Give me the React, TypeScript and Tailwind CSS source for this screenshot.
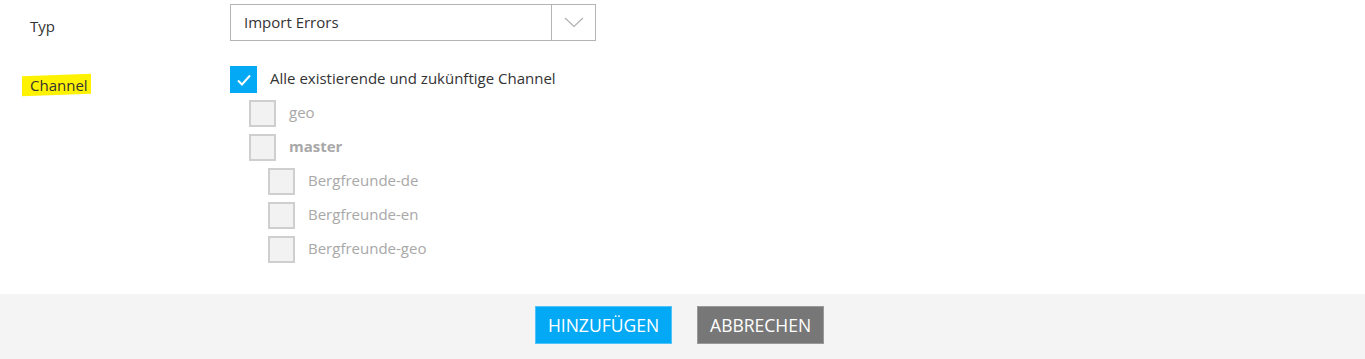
import { ReactNode } from "react";

type ChannelRow = {
  label: string;
  depth: number;
  bold?: boolean;
};

const channels: ChannelRow[] = [
  { label: "geo", depth: 1 },
  { label: "master", depth: 1, bold: true },
  { label: "Bergfreunde-de", depth: 2 },
  { label: "Bergfreunde-en", depth: 2 },
  { label: "Bergfreunde-geo", depth: 2 },
];

function CheckBox({ checked }: { checked?: boolean }) {
  if (checked) {
    return (
      <div className="w-[27px] h-[27px] shrink-0 bg-[#03a9f4] flex items-center justify-center">
        <svg width="16" height="14" viewBox="0 0 16 14" fill="none">
          <path d="M2 7.5 L6 11.5 L14 2.5" stroke="#fff" strokeWidth="2" />
        </svg>
      </div>
    );
  }
  return <div className="w-[27px] h-[27px] shrink-0 bg-[#f2f2f2] border-2 border-[#cfcfcf]" />;
}

function FormRow({ label, children }: { label: ReactNode; children: ReactNode }) {
  return (
    <div className="flex">
      <div className="w-[230px] shrink-0 pl-[30px]">{label}</div>
      <div className="flex-1">{children}</div>
    </div>
  );
}

export default function App() {
  return (
    <div className="w-[1365px] h-[359px] bg-white flex flex-col text-[15px] text-[#333] font-['Open_Sans',sans-serif]">
      <div className="flex-1 pt-[4px]">
        <FormRow label={<div className="pt-[12px] leading-[20px]">Typ</div>}>
          <div className="w-[366px] h-[37px] border border-[#b4b4b4] flex">
            <div className="flex-1 pl-[13px] flex items-center">Import Errors</div>
            <div className="w-[44px] border-l border-[#b4b4b4] flex items-center justify-center">
              <svg width="20" height="11" viewBox="0 0 20 11" fill="none">
                <path d="M1 1 L10 9.5 L19 1" stroke="#b0b0b0" strokeWidth="1.2" />
              </svg>
            </div>
          </div>
        </FormRow>

        <div className="mt-[25px]">
          <FormRow
            label={
              <div className="pt-[8px]">
                <span className="relative inline-block leading-[18px]">
                  <span className="absolute left-[-8px] right-[-3px] top-[-1px] bottom-[-1px] bg-[#fff200] -skew-y-2" />
                  <span className="relative">Channel</span>
                </span>
              </div>
            }
          >
            <div className="flex flex-col gap-[7px]">
              <div className="flex items-center gap-[13px]">
                <CheckBox checked />
                <span className="mb-[3px]">Alle existierende und zukünftige Channel</span>
              </div>
              {channels.map((c) => (
                <div
                  key={c.label}
                  className={`flex items-center gap-[13px] ${c.depth === 1 ? "pl-[19px]" : "pl-[38px]"}`}
                >
                  <CheckBox />
                  <span className={`mb-[3px] text-[#a8a8a8] ${c.bold ? "font-bold" : ""}`}>{c.label}</span>
                </div>
              ))}
            </div>
          </FormRow>
        </div>
      </div>

      <div className="h-[65px] bg-[#f4f4f4] flex items-start pt-[12px] justify-center gap-[25px] pr-[6px]">
        <button className="h-[38px] px-[12px] bg-[#03a9f4] border border-[#4fc3f7] text-white text-[17.5px]">
          HINZUFÜGEN
        </button>
        <button className="h-[38px] px-[12px] bg-[#777] border border-[#999] text-white text-[17.5px]">
          ABBRECHEN
        </button>
      </div>
    </div>
  );
}
